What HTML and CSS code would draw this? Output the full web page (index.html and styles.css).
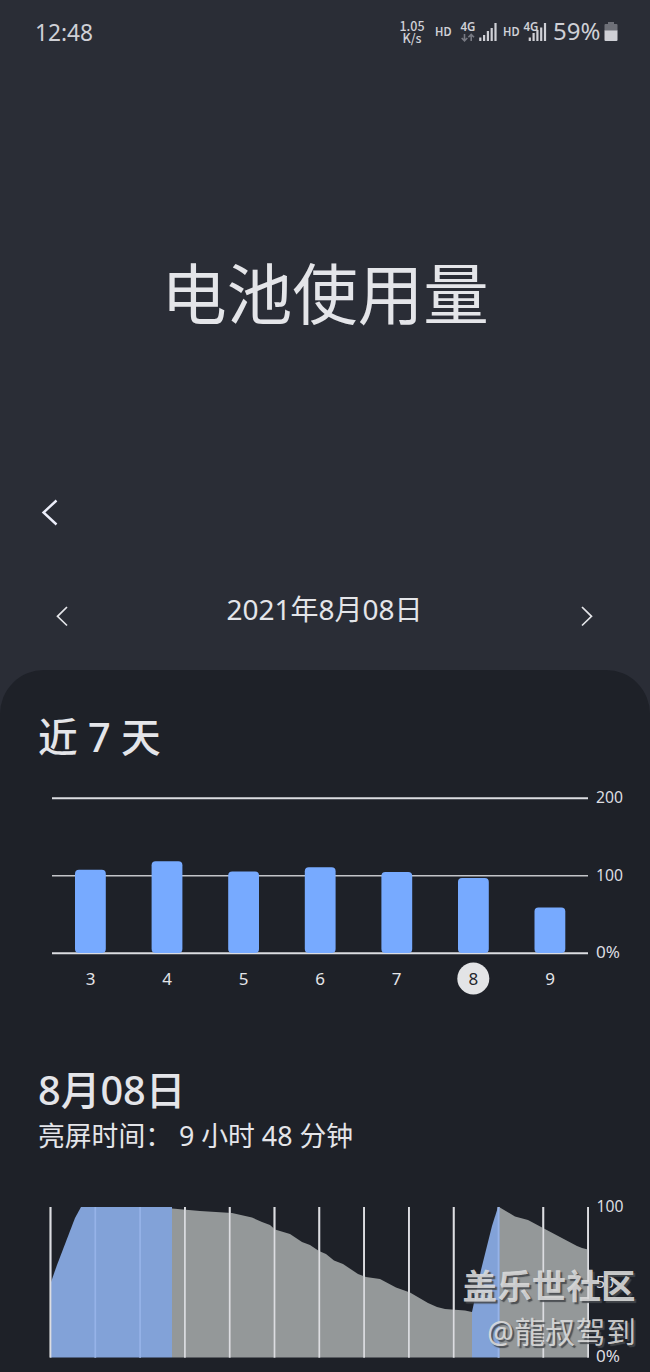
FILE: index.html
```html
<!DOCTYPE html>
<html lang="zh-CN">
<head>
<meta charset="utf-8">
<title>电池使用量</title>
<link rel="stylesheet" href="styles.css">
</head>
<body>
<main class="screen">
  <header class="status">
    <span class="clock">12:48</span>
    <div class="indicators">
      <div class="speed"><span>1.05</span><span>K/s</span></div>
      <svg class="status-icons" width="122" height="32" viewBox="430 16 122 32">
        <g class="status-text">
          <text x="434" y="35.5" textLength="16.500" lengthAdjust="spacingAndGlyphs">HD</text>
          <text x="459.500" y="31" textLength="15" lengthAdjust="spacingAndGlyphs">4G</text>
          <text x="502" y="35.5" textLength="16.500" lengthAdjust="spacingAndGlyphs">HD</text>
          <text x="522.500" y="31" textLength="15" lengthAdjust="spacingAndGlyphs">4G</text>
        </g>
        <path class="traffic" d="M463.5 34v6.5M460.7 38l2.800 2.800 2.800-2.800M470.200 41v-6.500M467.400 37.200l2.800-2.800 2.800 2.800"/>
        <path class="signal" d="M479.300 41v-3.500M483.100 41v-6M486.900 41v-10M490.700 41v-13M494.500 41v-18"/>
        <path class="signal" d="M528.800 41v-3.500M532.600 41v-8M536.400 41v-11M540.200 41v-13.500M544 41v-18"/>
      </svg>
      <span class="percent">59%</span>
      <svg class="battery" width="14" height="20" viewBox="0 0 14 20">
        <path fill="#6e7078" d="M4 0h6v2h2.500q1 0 1 1v6H.5V3q0-1 1-1H4z"/>
        <path fill="#cfd0d6" d="M.5 8.500h13V18q0 1-1 1h-11q-1 0-1-1z"/>
      </svg>
    </div>
  </header>

  <h1 class="title">电池使用量</h1>

  <nav class="back">
    <svg width="20" height="28" viewBox="0 0 20 28"><path d="M16.500 2.500L3.500 14.500l13 12"/></svg>
  </nav>

  <div class="date-row">
    <svg class="arrow" width="14" height="22" viewBox="0 0 14 22"><path d="M12 2L2.500 11.300 12 20.500"/></svg>
    <span class="date">2021年8月08日</span>
    <svg class="arrow" width="14" height="22" viewBox="0 0 14 22"><path d="M2 2l9.500 9.300L2 20.500"/></svg>
  </div>

  <section class="panel">
    <h2 class="heading">近 7 天</h2>
    <svg class="week" width="650" height="220" viewBox="0 780 650 220">
      <path class="rule" d="M52 798.300h536M52 953.200h536"/>
      <path class="rule thin" d="M52 875.700h536"/>
      <g class="bars">
        <rect x="75" y="869.700" width="30.800" height="83.300" rx="4"/>
        <rect x="151.600" y="861.200" width="30.800" height="91.800" rx="4"/>
        <rect x="228.200" y="871.500" width="30.800" height="81.500" rx="4"/>
        <rect x="304.800" y="867.200" width="30.800" height="85.800" rx="4"/>
        <rect x="381.400" y="872" width="30.800" height="81" rx="4"/>
        <rect x="458" y="878" width="30.800" height="75" rx="4"/>
        <rect x="534.500" y="907.500" width="30.800" height="45.500" rx="4"/>
      </g>
      <circle cx="473.300" cy="978.500" r="16" fill="#e3e4e6"/>
      <g class="days">
        <text x="90.700" y="985.300">3</text><text x="167" y="985.300">4</text><text x="243.600" y="985.300">5</text>
        <text x="320.200" y="985.300">6</text><text x="396.600" y="985.300">7</text>
        <text class="current" x="473.400" y="985.300">8</text><text x="550" y="985.300">9</text>
      </g>
      <g class="axis">
        <text x="596" y="803.300">200</text><text x="596" y="881">100</text><text x="596" y="958.300" textLength="24" lengthAdjust="spacingAndGlyphs">0%</text>
      </g>
    </svg>

    <h2 class="heading day">8月08日</h2>
    <p class="usage">亮屏时间： 9 小时 48 分钟</p>

    <div class="timeline">
      <svg class="level" width="650" height="182" viewBox="0 1190 650 182">
        <path class="rule slim" d="M50.500 1207v150.500M95.300 1207v150.500M140.100 1207v150.500M184.900 1207v150.500M229.700 1207v150.500M274.500 1207v150.500M319.300 1207v150.500M364.100 1207v150.500M408.900 1207v150.500M453.700 1207v150.500M498.500 1207v150.500M543.300 1207v150.500M588.100 1207v150.500"/>
        <path class="drain" d="M172 1208.500L200 1211 232 1213 252 1217.500 262 1222 270 1225 275 1229.500 290 1234 302 1242 310 1245 319 1251 326 1254 334 1260.500 343 1264 358 1274 366 1277 380 1279 396 1287.500 410 1292.500 428 1303 437 1307 445 1309 465 1310.500 472 1312V1357.500H172z"/>
        <path class="drain" d="M499 1207L515 1216.500 528 1220 543 1228 560 1237 577 1246 582 1248 588 1249.500V1357.500H499z"/>
        <path class="charge" d="M51 1282L57 1265 75 1218 81 1207H172V1357.500H51z"/>
        <path class="charge" d="M472 1312L481 1270 492 1226 498 1207H499.500V1357.500H472z"/>
        <path class="rule slim" d="M184.900 1207v150.500M229.700 1207v150.500M274.500 1207v150.500M319.300 1207v150.500M364.100 1207v150.500M408.900 1207v150.500M453.700 1207v150.500M543.300 1207v150.500M588.100 1207v150.500M50.500 1207v150.500"/>
        <path class="rule slim charged" d="M95.300 1207v150.500M140.100 1207v150.500M498.500 1207v150.500"/>
        <g class="axis">
          <text x="596.500" y="1212.300">100</text><text x="596" y="1287.500">50</text><text x="596" y="1362.300" textLength="24" lengthAdjust="spacingAndGlyphs">0%</text>
        </g>
      </svg>
      <svg class="watermark" width="190" height="100" viewBox="455 1260 190 100">
        <text class="community" x="462.500" y="1299" textLength="173">盖乐世社区</text>
        <text class="author" x="487" y="1342.500" textLength="149">@龍叔驾到</text>
      </svg>
    </div>
  </section>
</main>
</body>
</html>
```
FILE: styles.css
```css
* { box-sizing: border-box; }
body {
  margin: 0;
  background: #2a2d36;
  color: #e4e5e9;
  font-family: "Noto Sans", "Noto Sans CJK SC", sans-serif;
}
.screen {
  width: 650px;
  height: 1372px;
  display: flex;
  flex-direction: column;
  overflow: hidden;
}
.status {
  height: 64px;
  padding: 0 32px 0 35px;
  display: flex;
  align-items: center;
  justify-content: space-between;
  color: #cfd0d6;
  flex: none;
}
.clock { font-size: 22.7px; }
.indicators { display: flex; align-items: center; }
.speed {
  width: 31px;
  display: flex;
  flex-direction: column;
  align-items: center;
  font-family: "Noto Sans CJK SC", sans-serif;
  font-size: 12.5px;
  font-weight: 500;
  line-height: 12px;
  padding-right: 7px;
}
.status-icons { flex: none; }
.status-text { font-size: 12.5px; font-weight: 600; fill: #cfd0d6; }
.signal { stroke: #cfd0d6; stroke-width: 2.2; fill: none; }
.traffic { stroke: #777982; stroke-width: 1.6; fill: none; }
.percent { width: 51px; font-size: 24px; line-height: 30px; margin-top: -2px; }
.battery { flex: none; }
.title {
  margin: 182px 0 0;
  height: 96px;
  line-height: 96px;
  font-size: 65.5px;
  font-weight: 400;
  text-align: center;
  flex: none;
}
.back { margin: 156px 0 0 40px; height: 28px; flex: none; }
.back svg { display: block; }
.back path { fill: none; stroke: #eceefa; stroke-width: 2.4; }
.date-row {
  height: 40px;
  margin-top: 63px;
  padding: 0 56px 0 55px;
  display: flex;
  justify-content: space-between;
  align-items: center;
  flex: none;
}
.date { font-size: 28px; line-height: 40px; }
.arrow { margin-top: 13px; }
.arrow path { fill: none; stroke: #e4e5e9; stroke-width: 1.7; }
.panel {
  margin-top: 41px;
  flex: 1;
  background: #1e2128;
  border-radius: 44px 44px 0 0;
  display: flex;
  flex-direction: column;
}
.heading {
  margin: 39px 0 0 38px;
  height: 56px;
  line-height: 56px;
  font-size: 39.7px;
  font-weight: 500;
}
.week { margin-top: 15px; flex: none; }
.rule { stroke: #dcdde1; stroke-width: 2; fill: none; }
.slim { stroke-width: 1.7; }
.thin { stroke-width: 1.6; stroke: #c4c5c9; }
.bars { fill: #77aaff; }
.days { font-size: 17px; text-anchor: middle; fill: #e4e5e9; }
.days .current { fill: #24262b; }
.axis { font-size: 15.7px; fill: #dcdde1; }
.day { margin-top: 62px; }
.usage { margin: 0 0 0 38px; height: 36px; line-height: 36px; font-size: 26.8px; white-space: nowrap; }
.timeline { position: relative; margin-top: 36px; height: 182px; }
.level { display: block; }
.drain { fill: #949899; }
.charge { fill: #82a2d8; }
.charged { stroke: #96b3e8; }
.watermark { position: absolute; left: 455px; top: 70px; }
.watermark text { fill: #dcdcdc; fill-opacity: 0.9; text-shadow: 2px 2px 1px #45484c; }
.community { font-size: 34.5px; font-weight: 700; }
.author { font-size: 30px; }
```
